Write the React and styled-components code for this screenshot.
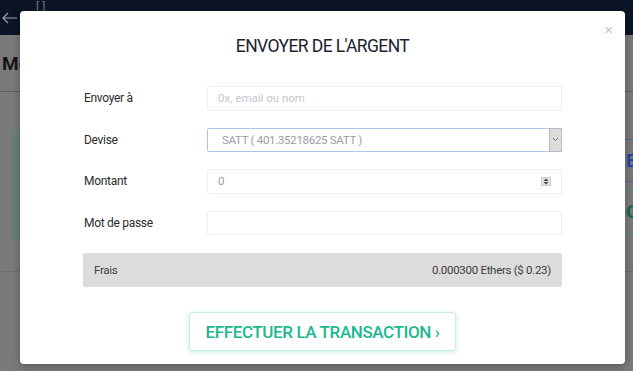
import React from 'react'
import styled, { createGlobalStyle } from 'styled-components'

const Global = createGlobalStyle`
html, body {
    margin: 0;
    padding: 0;
    width: 633px;
    height: 371px;
    overflow: hidden;
    font-family: Roboto, "Liberation Sans", sans-serif;
}
* { box-sizing: border-box; }
`

const SPage = styled.div`
position: relative;
width: 633px;
height: 371px;
background: #7a7a7a;
overflow: hidden;
`

const STopBar = styled.div`
height: 35px;
background: #0b1526;
display: flex;
align-items: center;
gap: 18px;
padding-left: 2px;
color: #8a93a3;
`

const SBracket = styled.span`
font-size: 12px;
margin-top: -20px;
color: #6c7686;
`

const SHeading = styled.div`
height: 57px;
border-bottom: 1px solid #5e5e5e;
display: flex;
align-items: center;
padding-left: 2px;
font-size: 19px;
font-weight: bold;
color: #141414;
`

const SCards = styled.div`
display: flex;
justify-content: space-between;
margin-top: 39px;
padding-left: 11px;
`

const SGreenCard = styled.div`
width: 200px;
height: 110px;
background: #6d7f79;
`

const SRightCard = styled.div`
width: 160px;
display: flex;
flex-direction: column;
margin-top: 8px;
`

const SLine = styled.div`
height: 1px;
margin-top: ${p => p.$gap || 0}px;
background: ${p => p.$color};
`

const SBigLetter = styled.div`
height: 41px;
display: flex;
align-items: center;
padding-left: 153px;
white-space: nowrap;
font-size: 19px;
font-weight: bold;
color: ${p => p.$color};
`

const SBottomLine = styled.div`
margin-top: 30px;
height: 1px;
background: #6c6c6c;
`

const SModal = styled.div`
position: absolute;
left: 20px;
top: 11px;
width: 605px;
height: 353px;
background: #fff;
border-radius: 4px;
box-shadow: 0 2px 8px rgba(0, 0, 0, 0.3);
padding: 23px 63px 0 63px;
display: flex;
flex-direction: column;
`

const SClose = styled.button`
position: absolute;
top: 10px;
right: 12px;
border: none;
background: none;
padding: 0;
font-size: 15px;
color: #c4c4c4;
font-family: "Liberation Sans", sans-serif;
`

const STitle = styled.h1`
margin: 0;
text-align: center;
font-size: 17.5px;
font-weight: 400;
color: #1c2230;
letter-spacing: -0.6px;
line-height: 24px;
`

const SForm = styled.div`
margin-top: 28px;
display: flex;
flex-direction: column;
gap: 17px;
`

const SRow = styled.div`
display: grid;
grid-template-columns: 124px 1fr;
align-items: center;
`

const SLabel = styled.label`
font-size: 12px;
color: #2b2b2b;
padding-left: 1px;
letter-spacing: -0.3px;
`

const SField = styled.div`
position: relative;
height: 24.5px;
border: 1px solid ${p => (p.$focus ? '#a9c8ea' : '#eceef0')};
border-radius: 2px;
display: flex;
align-items: center;
padding-left: ${p => (p.$indent ? 14 : 10)}px;
font-size: 11.5px;
color: #9a9ea4;
letter-spacing: -0.3px;
background: #fff;
`

const SInput = styled.input`
border: none;
outline: none;
background: none;
padding: 0;
width: 100%;
font: inherit;
color: inherit;
&::placeholder { color: #c2c6cc; }
`

const SSelectArrow = styled.span`
position: absolute;
right: -1px;
top: -1px;
bottom: -1px;
width: 13px;
background: #dcdcdc;
border: 1px solid #b9b9b9;
display: flex;
align-items: center;
justify-content: center;
`

const SSpinner = styled.span`
position: absolute;
right: 10px;
top: 7px;
width: 10px;
height: 9px;
background: #e2e2e2;
border: 1px solid #cfcfcf;
display: flex;
align-items: center;
justify-content: center;
`

const SFees = styled.div`
margin-top: 18px;
height: 34px;
background: #dcdcdc;
border-radius: 2px;
display: flex;
align-items: center;
justify-content: space-between;
padding: 0 11px;
font-size: 11.5px;
color: #3c3c3c;
letter-spacing: -0.3px;
`

const SAction = styled.div`
display: flex;
justify-content: center;
margin-top: 25px;
`

const SButton = styled.button`
width: 267px;
height: 39px;
background: #fff;
border: 1px solid #c8ede2;
border-radius: 3px;
box-shadow: 0 1px 4px rgba(28, 185, 143, 0.25);
color: #1db88f;
font-family: inherit;
font-size: 17px;
font-weight: 500;
letter-spacing: -0.4px;
cursor: pointer;
`

const rows = [
    { label: 'Envoyer à', kind: 'text', placeholder: '0x, email ou nom' },
    { label: 'Devise', kind: 'select', value: 'SATT ( 401.35218625 SATT )' },
    { label: 'Montant', kind: 'number', value: '0' },
    { label: 'Mot de passe', kind: 'password' },
]

const Field = ({ row }) => {
    if (row.kind === 'select')
        return <SField $focus $indent>
            {row.value}
            <SSelectArrow>
                <svg width="7" height="5" viewBox="0 0 7 5"><path d="M1 1l2.5 2.5L6 1" fill="none" stroke="#777" strokeWidth="1" /></svg>
            </SSelectArrow>
        </SField>
    if (row.kind === 'number')
        return <SField>
            <SInput defaultValue={row.value} readOnly />
            <SSpinner>
                <svg width="6" height="7" viewBox="0 0 6 7"><path d="M3 0.5L5.5 3H0.5z M3 6.5L5.5 4H0.5z" fill="#444" /></svg>
            </SSpinner>
        </SField>
    return <SField>
        <SInput type={row.kind} placeholder={row.placeholder} />
    </SField>
}

const App = () => {
    return <SPage>
        <Global />
        <STopBar>
            <svg width="16" height="12" viewBox="0 0 16 12"><path d="M15 6H1M6 1L1 6l5 5" fill="none" stroke="#9aa3b2" strokeWidth="1.2" /></svg>
            <SBracket>[ ]</SBracket>
        </STopBar>
        <SHeading>Mo</SHeading>
        <SCards>
            <SGreenCard />
            <SRightCard>
                <SLine $color="#4a66a0" />
                <SBigLetter $color="#2446a0">E</SBigLetter>
                <SLine $color="#4a66a0" />
                <SLine $color="#5f8a78" $gap={8} />
                <SBigLetter $color="#0f6b45">O</SBigLetter>
                <SLine $color="#5f8a78" />
            </SRightCard>
        </SCards>
        <SBottomLine />

        <SModal>
            <SClose>×</SClose>
            <STitle>ENVOYER DE L'ARGENT</STitle>
            <SForm>
                {rows.map(r => <SRow key={r.label}>
                    <SLabel>{r.label}</SLabel>
                    <Field row={r} />
                </SRow>)}
            </SForm>
            <SFees>
                <span>Frais</span>
                <span>0.000300 Ethers ($ 0.23)</span>
            </SFees>
            <SAction>
                <SButton>EFFECTUER LA TRANSACTION ›</SButton>
            </SAction>
        </SModal>
    </SPage>
}

export default App
